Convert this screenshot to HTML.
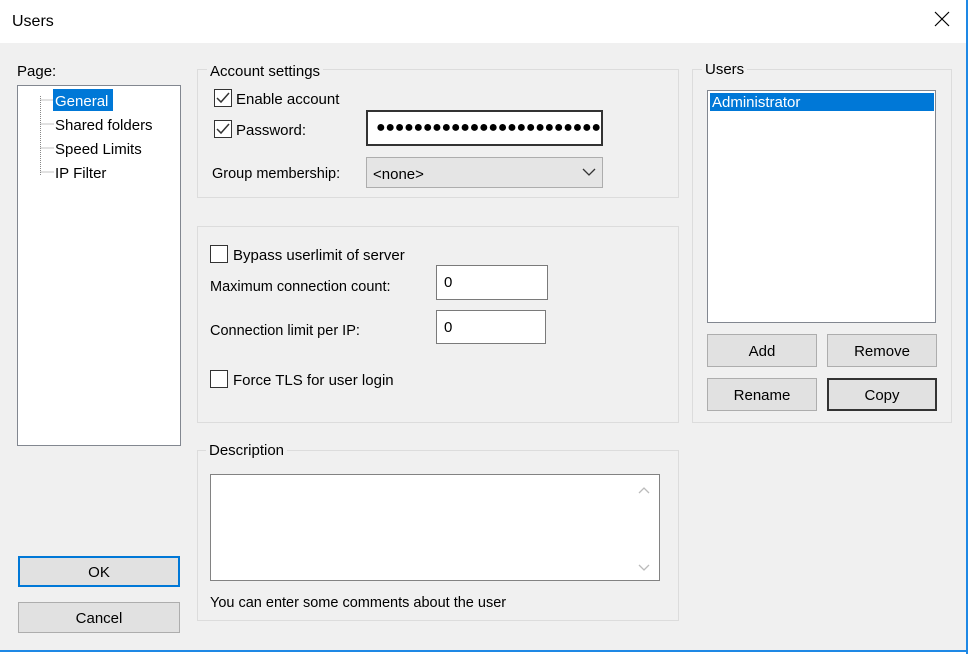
<!DOCTYPE html><html><head><style>
*{box-sizing:border-box}
body{margin:0;width:971px;height:656px;background:#fff;font-family:"Liberation Sans",sans-serif;font-size:15px;color:#000;position:relative;overflow:hidden}
.a{position:absolute}
.win{left:0;top:43px;width:967px;height:609px;background:#f0f0f0;border-bottom:2px solid #1e88e5}
.rb{left:966px;top:0;width:2px;height:654px;background:#1e88e5}
.g{position:absolute;border:1px solid #dcdcdc}
.lbl{position:absolute;background:#f0f0f0;padding:2px 3px 0;line-height:16px}
.t{position:absolute;line-height:18px;white-space:nowrap;padding-top:2px}
.cb{position:absolute;width:18px;height:18px;border:1px solid #333;background:#fff}
.in{position:absolute;background:#fff;border:1px solid #7a7a7a}
.btn{position:absolute;background:#e1e1e1;border:1px solid #adadad;text-align:center;padding-top:2px}
</style></head><body>
<div class="a win"></div><div class="a rb"></div>
<div class="t" style="left:12px;top:11px;font-size:16px">Users</div>
<svg class="a" style="left:934px;top:11px" width="16" height="16"><path d="M1 1L15 15M15 1L1 15" stroke="#000" stroke-width="1.2"/></svg>

<div class="t" style="left:17px;top:61px">Page:</div>
<div class="in" style="left:17px;top:85px;width:164px;height:361px;border-color:#828790"></div>
<svg class="a" style="left:36px;top:96px" width="20" height="82"><path d="M4.5 0V80M4.5 4H18M4.5 28H18M4.5 52H18M4.5 76H18" stroke="#888" stroke-dasharray="1 1"/></svg>
<div class="a" style="left:53px;top:89px;width:60px;height:22px;background:#0078d7"></div>
<div class="t" style="left:55px;top:91px;color:#fff">General</div>
<div class="t" style="left:55px;top:115px">Shared folders</div>
<div class="t" style="left:55px;top:139px">Speed Limits</div>
<div class="t" style="left:55px;top:163px">IP Filter</div>

<div class="g" style="left:197px;top:69px;width:482px;height:129px"></div>
<div class="lbl" style="left:207px;top:62px">Account settings</div>
<div class="cb" style="left:214px;top:89px"></div>
<svg class="a" style="left:214px;top:89px" width="18" height="18"><path d="M3 9L7 13L15 4" stroke="#333" stroke-width="1.5" fill="none"/></svg>
<div class="t" style="left:236px;top:89px">Enable account</div>
<div class="cb" style="left:214px;top:120px"></div>
<svg class="a" style="left:214px;top:120px" width="18" height="18"><path d="M3 9L7 13L15 4" stroke="#333" stroke-width="1.5" fill="none"/></svg>
<div class="t" style="left:236px;top:120px">Password:</div>
<div class="in" style="left:366px;top:110px;width:237px;height:36px;border:2px solid #333"></div>
<div class="t" style="left:376px;top:117px;font-size:16px;letter-spacing:-0.3px;overflow:hidden;width:224px">●●●●●●●●●●●●●●●●●●●●●●●●</div>
<div class="t" style="left:212px;top:163px;font-size:14.5px">Group membership:</div>
<div class="in" style="left:366px;top:157px;width:237px;height:31px;background:#e5e5e5;border-color:#adadad"></div>
<div class="t" style="left:373px;top:164px">&lt;none&gt;</div>
<svg class="a" style="left:582px;top:167px" width="14" height="10"><path d="M1 2L7 8L13 2" stroke="#333" stroke-width="1.3" fill="none"/></svg>

<div class="g" style="left:197px;top:226px;width:482px;height:197px"></div>
<div class="cb" style="left:210px;top:245px"></div>
<div class="t" style="left:233px;top:245px">Bypass userlimit of server</div>
<div class="t" style="left:210px;top:276px;font-size:14.5px">Maximum connection count:</div>
<div class="in" style="left:436px;top:265px;width:112px;height:35px"></div>
<div class="t" style="left:444px;top:272px">0</div>
<div class="t" style="left:210px;top:320px;font-size:14.5px">Connection limit per IP:</div>
<div class="in" style="left:436px;top:310px;width:110px;height:34px"></div>
<div class="t" style="left:444px;top:317px">0</div>
<div class="cb" style="left:210px;top:370px"></div>
<div class="t" style="left:233px;top:370px">Force TLS for user login</div>

<div class="g" style="left:197px;top:450px;width:482px;height:171px"></div>
<div class="lbl" style="left:206px;top:441px">Description</div>
<div class="in" style="left:210px;top:474px;width:450px;height:107px;border-color:#828282"></div>
<svg class="a" style="left:637px;top:485px" width="14" height="90"><path d="M2 8L7 3L12 8M2 80L7 85L12 80" stroke="#bbb" stroke-width="1.3" fill="none"/></svg>
<div class="t" style="left:210px;top:592px;font-size:14.5px">You can enter some comments about the user</div>

<div class="g" style="left:692px;top:69px;width:260px;height:354px"></div>
<div class="lbl" style="left:702px;top:60px">Users</div>
<div class="in" style="left:707px;top:90px;width:229px;height:233px;border-color:#828790"></div>
<div class="a" style="left:710px;top:93px;width:224px;height:18px;background:#0078d7"></div>
<div class="t" style="left:712px;top:93px;color:#fff;padding-top:1px">Administrator</div>
<div class="btn" style="left:707px;top:334px;width:110px;height:33px;line-height:29px">Add</div>
<div class="btn" style="left:827px;top:334px;width:110px;height:33px;line-height:29px">Remove</div>
<div class="btn" style="left:707px;top:378px;width:110px;height:33px;line-height:29px">Rename</div>
<div class="btn" style="left:827px;top:378px;width:110px;height:33px;line-height:27px;border:2px solid #333">Copy</div>

<div class="btn" style="left:18px;top:556px;width:162px;height:31px;line-height:25px;border:2px solid #0078d7">OK</div>
<div class="btn" style="left:18px;top:602px;width:162px;height:31px;line-height:27px">Cancel</div>
</body></html>
